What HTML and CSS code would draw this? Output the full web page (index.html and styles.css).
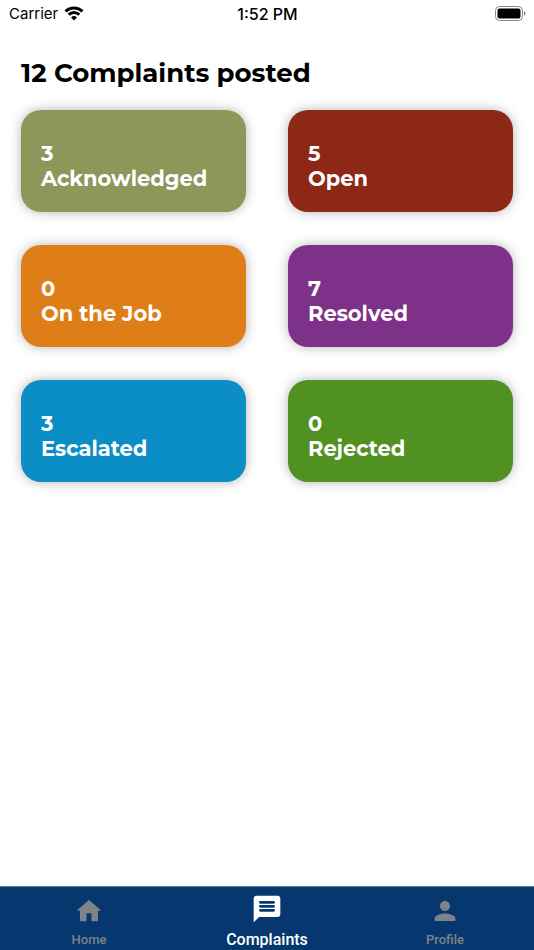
FILE: index.html
```html
<!DOCTYPE html>
<html lang="en">
<head>
<meta charset="utf-8">
<meta name="viewport" content="width=device-width, initial-scale=1">
<title>Complaints</title>
<link rel="stylesheet" href="styles.css">
</head>
<body>
<header class="status">
  <div class="carrier">Carrier
    <svg class="wifi" viewBox="0 0 20 15" aria-hidden="true"><path d="M1.500 5.300a12.300 12.300 0 0 1 17 0" /><path d="M4.700 8.700a7.700 7.700 0 0 1 10.600 0"/><path class="dot" d="M7 11.500a4.400 4.400 0 0 1 6 0L10 14.500z"/></svg>
  </div>
  <time class="clock">1:52 PM</time>
  <svg class="battery" viewBox="0 0 31 15" aria-hidden="true"><rect class="shell" x=".5" y=".5" width="27" height="14" rx="4"/><rect x="2.500" y="2.500" width="23" height="10" rx="2"/><path class="cap" d="M29 5v5c2-.8 2-4.200 0-5z"/></svg>
</header>
<main class="content">
  <h1 class="title">12 Complaints posted</h1>
  <div class="grid">
    <a class="card olive" href="#"><span>3</span><span>Acknowledged</span></a>
    <a class="card red" href="#"><span>5</span><span>Open</span></a>
    <a class="card orange" href="#"><span>0</span><span>On the Job</span></a>
    <a class="card purple" href="#"><span>7</span><span>Resolved</span></a>
    <a class="card blue" href="#"><span>3</span><span>Escalated</span></a>
    <a class="card green" href="#"><span>0</span><span>Rejected</span></a>
  </div>
</main>
<nav class="tabs">
  <a class="tab" href="#"><svg class="icon" viewBox="0 0 24 24" aria-hidden="true"><path d="M10 19.500v-5.700h4v5.700c0 .4.300.7.700.7h3.800c.4 0 .7-.3.700-.7v-7.700h1.600c.5 0 .7-.5.300-.8L12.500 3.500c-.3-.3-.7-.3-1 0L2.900 11c-.4.300-.2.800.3.800h1.600v7.700c0 .4.300.7.700.7h3.800c.4 0 .7-.3.700-.7z"/></svg><span>Home</span></a>
  <a class="tab active" href="#" aria-current="page"><svg class="icon" viewBox="0 0 24 24" aria-hidden="true"><path fill-rule="evenodd" d="M20 2H4c-1.100 0-2 .9-2 2v18l4-4h14c1.100 0 2-.9 2-2V4c0-1.100-.9-2-2-2zM7 6h10a1 1 0 0 1 0 2H7a1 1 0 0 1 0-2zm0 3h10a1 1 0 0 1 0 2H7a1 1 0 0 1 0-2zm0 3h10a1 1 0 0 1 0 2H7a1 1 0 0 1 0-2z"/></svg><span>Complaints</span></a>
  <a class="tab" href="#"><svg class="icon" viewBox="0 0 24 24" aria-hidden="true"><path d="M12 12c2.210 0 4-1.790 4-4s-1.790-4-4-4-4 1.790-4 4 1.790 4 4 4zm0 2c-2.670 0-8.300 1.340-8.300 4v1.500q0 .5.500.5h15.600q.5 0 .5-.5V18c0-2.660-5.630-4-8.300-4z"/></svg><span>Profile</span></a>
</nav>
</body>
</html>
```
FILE: styles.css
```css
* { box-sizing: border-box; }
body {
  margin: 0;
  min-height: 100vh;
  display: flex;
  flex-direction: column;
  background: #fff;
  color: #000;
  font-family: Montserrat, "Open Sans", sans-serif;
}
a { color: inherit; text-decoration: none; }
.status {
  display: grid;
  grid-template-columns: 1fr auto 1fr;
  align-items: center;
  height: 27px;
  padding: 0 8px 0 9px;
  font: 15px/20px Inter, sans-serif;
}
.carrier { display: flex; align-items: center; gap: 6px; }
.wifi { width: 20px; height: 15px; fill: none; stroke: #000; stroke-width: 3; }
.wifi .dot { fill: #000; stroke: none; }
.clock { font-size: 16px; font-weight: 500; }
.battery { width: 31px; height: 15px; justify-self: end; }
.shell { fill: none; stroke: #888; }
.cap { fill: #888; }
.content { flex: 1; padding: 29px 21px; }
.title { margin: 0 0 20px; font-size: 26px; line-height: 34px; font-weight: 700; }
.grid { display: grid; grid-template-columns: 1fr 1fr; gap: 33px 42px; }
.card {
  display: flex;
  flex-direction: column;
  padding: 31px 20px 21px;
  border-radius: 20px;
  box-shadow: 0 0 12px rgba(0, 0, 0, .3);
  color: #fff;
  font-size: 21px;
  line-height: 25px;
  font-weight: 700;
}
.olive { background: #8e975a; }
.red { background: #8c2815; }
.orange { background: #df7e18; }
.purple { background: #7e3189; }
.blue { background: #0b8dc5; }
.green { background: #519122; }
.tabs {
  display: grid;
  grid-template-columns: 1fr 1fr 1fr;
  height: 64px;
  border-top: 1px solid #5a7ba0;
  background: #06386f;
}
.tab {
  display: flex;
  flex-direction: column;
  align-items: center;
  justify-content: flex-end;
  gap: 6px;
  padding-bottom: 2px;
  color: #7d8389;
  font: 500 13px/16px Roboto, sans-serif;
}
.icon { width: 30px; height: 30px; fill: currentColor; }
.active { padding-bottom: 1px; color: #fff; font-size: 16px; line-height: 18px; }
.active .icon { width: 32px; height: 32px; }
```
